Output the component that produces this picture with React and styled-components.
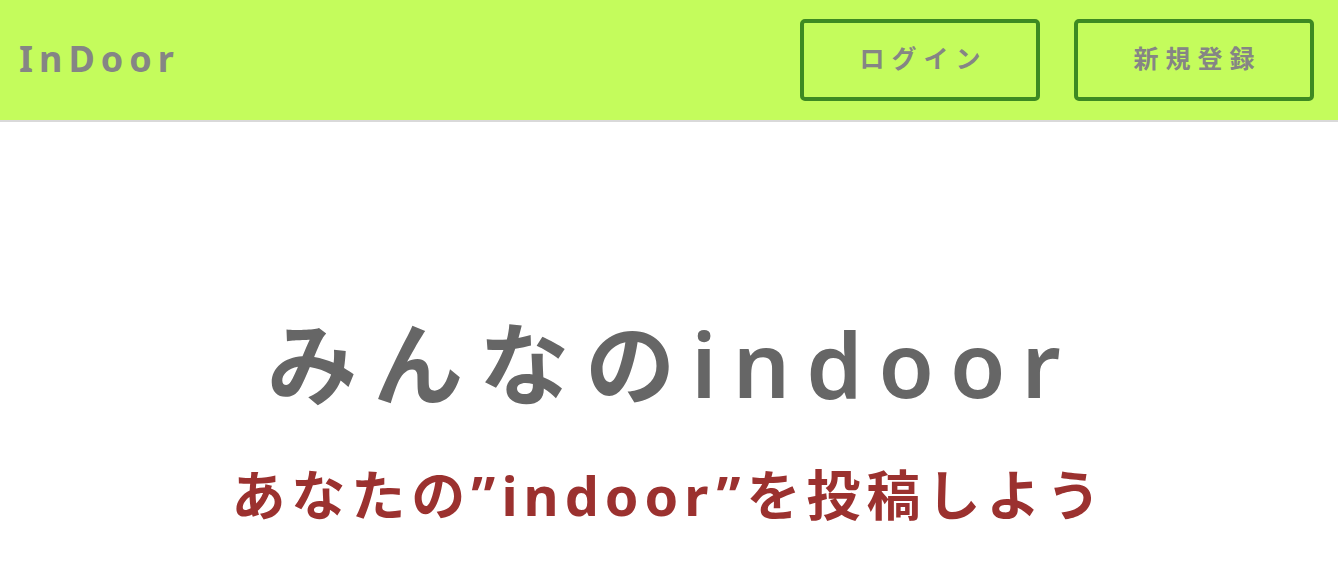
import React from 'react';
import styled, { createGlobalStyle } from 'styled-components';

const GlobalStyle = createGlobalStyle`
  html, body {
    margin: 0;
    padding: 0;
    background: #fff;
    font-family: "Noto Sans", "Noto Sans CJK JP", sans-serif;
  }
`;

const Header = styled.header`
  display: flex;
  align-items: center;
  justify-content: space-between;
  height: 120px;
  padding: 0 24px 0 19px;
  background: #c4fc5c;
  border-bottom: 2px solid #d9d9d9;
`;

const Logo = styled.h1`
  margin: 0 0 4px;
  font-size: 36px;
  font-weight: 700;
  letter-spacing: 6px;
  color: #858585;
`;

const Nav = styled.nav`
  display: flex;
  gap: 34px;
`;

const NavButton = styled.button`
  box-sizing: border-box;
  width: 240px;
  height: 82px;
  background: transparent;
  border: 4px solid #3d8a22;
  border-radius: 5px;
  font-family: "Noto Sans CJK JP", sans-serif;
  font-size: 25px;
  font-weight: 700;
  letter-spacing: 7px;
  color: #858585;
  cursor: pointer;
  padding: 0 0 6px 7px;
`;

const Hero = styled.main`
  display: flex;
  flex-direction: column;
  align-items: center;
  padding-top: 196px;
`;

const Title = styled.h2`
  margin: 0 0 0 6px;
  font-size: 90px;
  font-weight: 600;
  line-height: 1;
  letter-spacing: 16px;
  color: #666;
`;

const Catch = styled.p`
  margin: 60px 0 0;
  font-size: 54px;
  font-weight: 700;
  line-height: 1;
  letter-spacing: 6px;
  color: #9b312f;
`;

const App = () => {
  return (
    <>
      <GlobalStyle />
      <Header>
        <Logo>InDoor</Logo>
        <Nav>
          <NavButton>ログイン</NavButton>
          <NavButton>新規登録</NavButton>
        </Nav>
      </Header>
      <Hero>
        <Title>みんなのindoor</Title>
        <Catch>あなたの”indoor”を投稿しよう</Catch>
      </Hero>
    </>
  );
};

export default App;
